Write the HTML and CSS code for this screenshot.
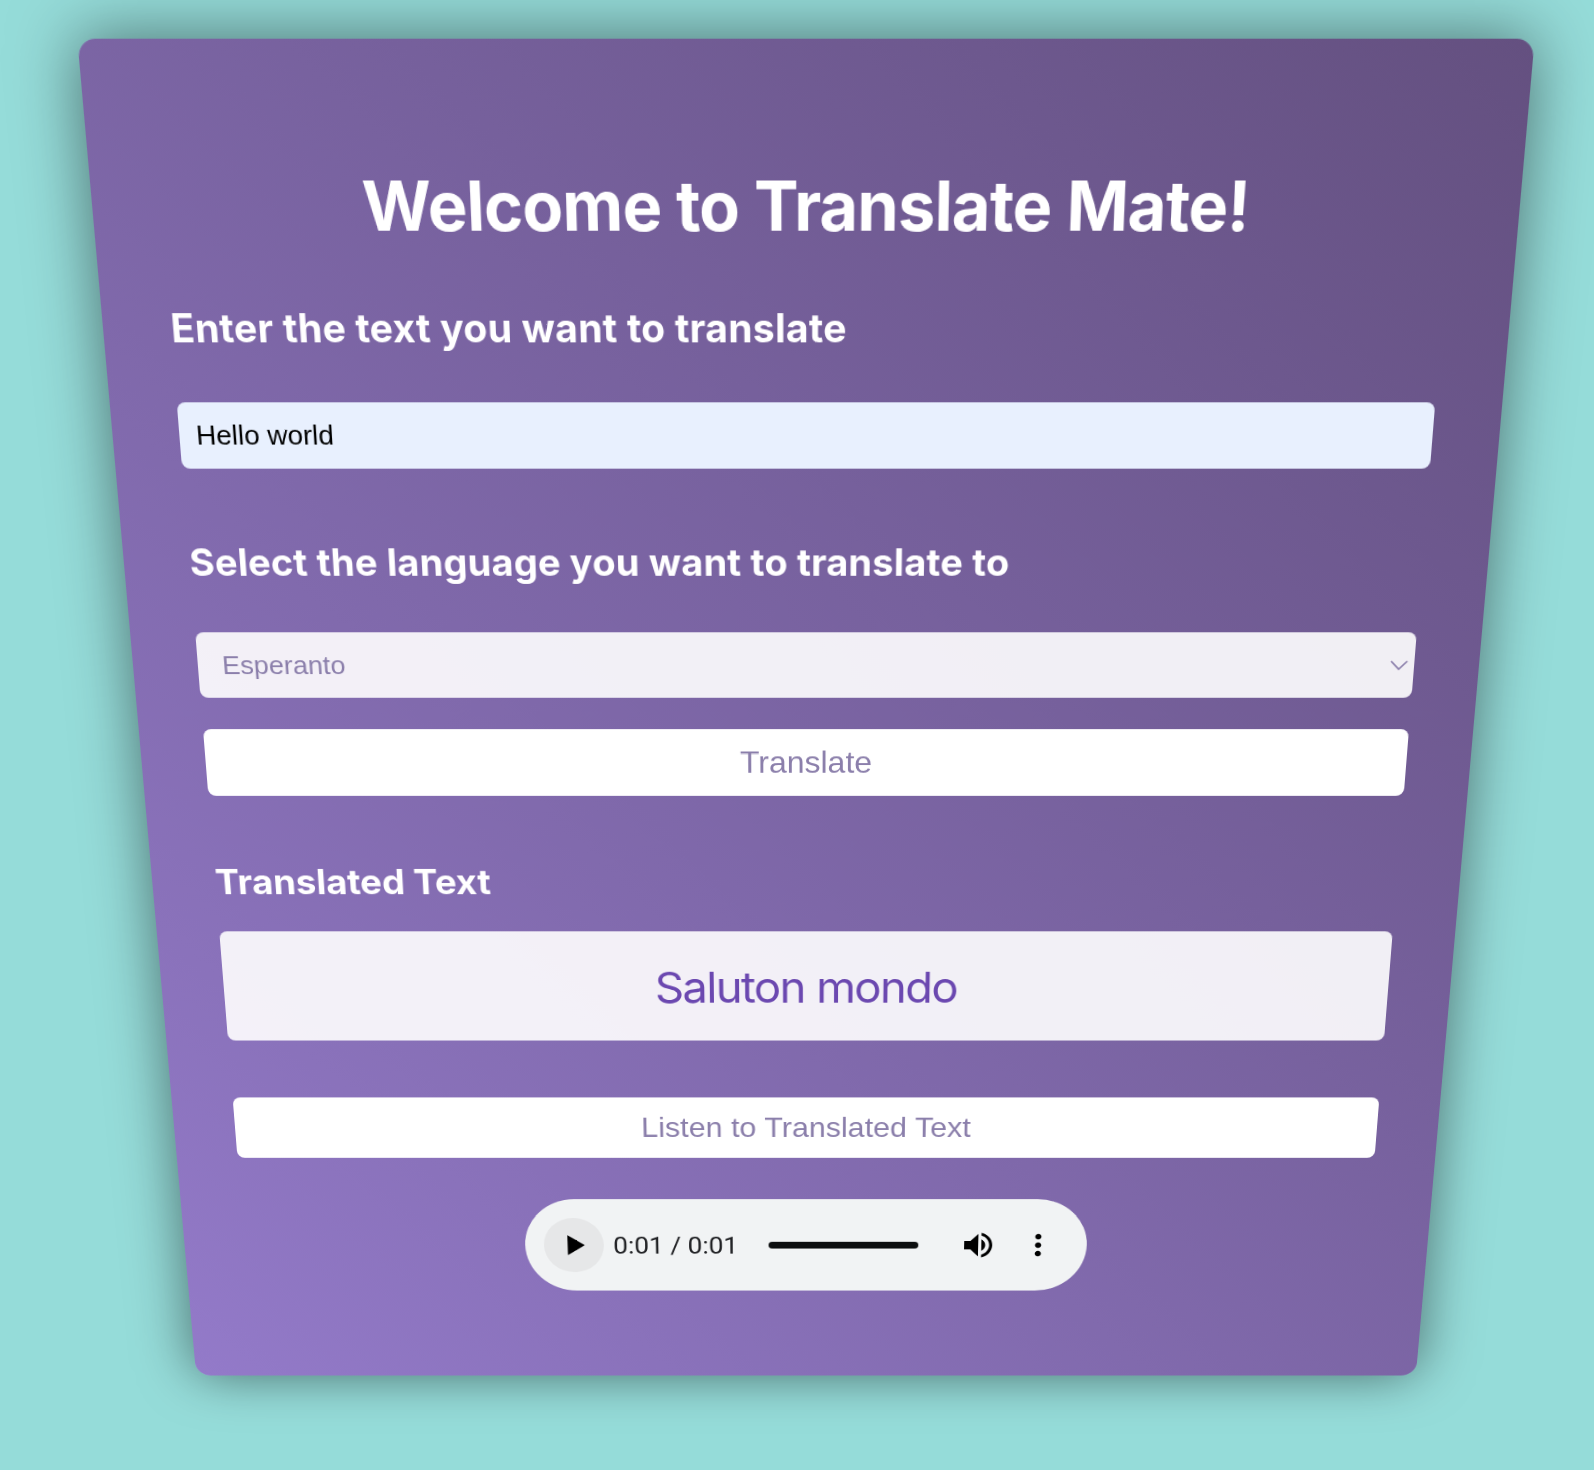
FILE: index.html
```html
<!DOCTYPE html>
<html lang="en">
<head>
<meta charset="utf-8">
<title>Translate Mate</title>
<link rel="stylesheet" href="styles.css">
</head>
<body>
<main class="card">
  <h1 class="title">Welcome to Translate Mate!</h1>
  <h2 class="label label-text">Enter the text you want to translate</h2>
  <input class="field" type="text" value="Hello world">
  <h2 class="label label-language">Select the language you want to translate to</h2>
  <div class="select">
    <span>Esperanto</span>
    <svg class="chevron" width="20" height="12" viewBox="0 0 20 12"><path d="M2 2l8 8 8-8" fill="none" stroke="currentColor" stroke-width="1.7"/></svg>
  </div>
  <button class="button" type="button">Translate</button>
  <h2 class="label label-result">Translated Text</h2>
  <p class="result">Saluton mondo</p>
  <button class="button button-listen" type="button">Listen to Translated Text</button>
  <div class="player">
    <span class="play"><svg class="icon" viewBox="0 0 24 24"><path d="M8 5v14l11-7z"/></svg></span>
    <span class="time">0:01 / 0:01</span>
    <span class="track"></span>
    <span class="control"><svg class="icon" viewBox="0 0 24 24"><path d="M3 9v6h4l5 5V4L7 9H3zm13.5 3c0-1.77-1.02-3.29-2.5-4.03v8.05c1.48-.73 2.5-2.25 2.5-4.02zM14 3.23v2.06c2.89.86 5 3.54 5 6.71s-2.11 5.85-5 6.71v2.06c4.01-.91 7-4.49 7-8.77s-2.99-7.86-7-8.77z"/></svg></span>
    <span class="control"><svg class="icon" viewBox="0 0 24 24"><path d="M12 8c1.1 0 2-.9 2-2s-.9-2-2-2-2 .9-2 2 .9 2 2 2zm0 2c-1.1 0-2 .9-2 2s.9 2 2 2 2-.9 2-2-.9-2-2-2zm0 6c-1.1 0-2 .9-2 2s.9 2 2 2 2-.9 2-2-.9-2-2-2z"/></svg></span>
  </div>
</main>
</body>
</html>
```
FILE: styles.css
```css
* {
  box-sizing: border-box;
}

html {
  height: 100%;
  overflow: hidden;
}

body {
  height: 100%;
  margin: 0;
  padding: 80px 0 0 142px;
  overflow: hidden;
  background: #95dcd9;
  font-family: Inter, sans-serif;
}

.card {
  display: flex;
  flex-direction: column;
  width: 1328px;
  height: 1373px;
  padding: 109px 64px 0;
  border-radius: 16px;
  background: linear-gradient(45deg, #937ac9, #645080);
  box-shadow: 0 0 60px rgba(0, 0, 0, 0.5);
  color: #fff;
  transform: perspective(2000px) rotateX(-15deg);
}

.title {
  margin: 0;
  font-size: 62px;
  font-weight: 700;
  letter-spacing: -0.75px;
  line-height: 76px;
  text-align: center;
  white-space: nowrap;
}

.label {
  margin: 0;
  font-size: 37px;
  font-weight: 700;
  line-height: 46px;
  white-space: nowrap;
}

.label-text {
  margin: 50px 0 46px;
  letter-spacing: 0.24px;
}

.label-language {
  margin: 68px 0 46px;
  letter-spacing: 0.18px;
}

.label-result {
  margin: 68px 0 30px;
}

.field {
  width: 100%;
  height: 63px;
  padding: 0 16px;
  border: 0;
  border-radius: 8px;
  background: #e8f0fe;
  color: #000;
  font: 26.67px "Liberation Sans", Arial, sans-serif;
}

.select {
  display: flex;
  align-items: center;
  justify-content: space-between;
  height: 66px;
  padding: 0 5px 0 24px;
  border-radius: 8px;
  background: rgba(255, 255, 255, 0.9);
  color: #8b7fab;
  font: 26.67px "Liberation Sans", Arial, sans-serif;
}

.chevron {
  display: block;
}

.button {
  height: 69px;
  margin-top: 32px;
  border: 0;
  border-radius: 8px;
  background: #fff;
  color: #8b7fab;
  font: 32px "Liberation Sans", Arial, sans-serif;
}

.result {
  display: flex;
  align-items: center;
  justify-content: center;
  height: 120px;
  margin: 0;
  padding-top: 2px;
  border-radius: 8px;
  background: rgba(255, 255, 255, 0.9);
  color: #6b48b0;
  font-size: 46.8px;
  letter-spacing: -1.6px;
}

.button-listen {
  margin-top: 64px;
}

.player {
  display: flex;
  align-items: center;
  align-self: center;
  width: 600px;
  height: 108px;
  margin-top: 48px;
  padding: 0 20px;
  border-radius: 54px;
  background: #f1f3f4;
  color: #000;
}

.play,
.control {
  display: flex;
  flex: 0 0 64px;
  align-items: center;
  justify-content: center;
  height: 64px;
}

.play {
  border-radius: 50%;
  background: #e6e7e8;
}

.icon {
  width: 40px;
  height: 40px;
  fill: #000;
}

.time {
  width: 176px;
  padding-left: 10px;
  color: #202124;
  font: 28px Roboto, sans-serif;
  white-space: nowrap;
}

.track {
  width: 160px;
  height: 8px;
  margin-right: 32px;
  border-radius: 4px;
  background: #0c0e0f;
}
```
